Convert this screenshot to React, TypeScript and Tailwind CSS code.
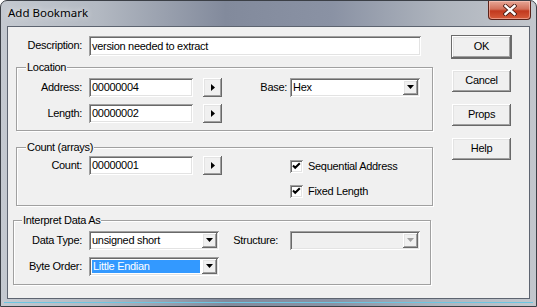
import React from "react";

const font = "font-['Liberation_Sans',Arial,sans-serif] text-[11px] leading-[13px] tracking-[-0.3px] text-black";
const raised =
  "bg-[#f0f0f0] shadow-[inset_-1px_-1px_0_#696969,inset_1px_1px_0_#ffffff,inset_-2px_-2px_0_#a0a0a0,inset_2px_2px_0_#e3e3e3]";
const sunken =
  "shadow-[inset_1px_1px_0_#a0a0a0,inset_-1px_-1px_0_#ffffff,inset_2px_2px_0_#696969,inset_-2px_-2px_0_#e3e3e3]";

const Field: React.FC<{ value: string; w: string }> = ({ value, w }) => (
  <div className={`${w} h-[19px] bg-white ${sunken} flex items-center pl-[3px] pt-px`}>{value}</div>
);

const ArrowBtn: React.FC = () => (
  <div className={`${raised} w-[19px] h-[19px] flex items-center justify-center`}>
    <svg width="4" height="7" viewBox="0 0 4 7">
      <path d="M0 0 L4 3.5 L0 7 Z" fill="#000" />
    </svg>
  </div>
);

const Combo: React.FC<{ value?: string; selected?: boolean; disabled?: boolean }> = ({
  value,
  selected,
  disabled,
}) => (
  <div
    className={`w-[130px] h-[19px] ${disabled ? "bg-[#f0f0f0]" : "bg-white"} ${sunken} flex items-stretch`}
  >
    {selected ? (
      <div className="flex-1 ml-[3px] my-[3px] mr-[2px] bg-[#3399ff] text-white flex items-center pl-px">
        {value}
      </div>
    ) : (
      <div className="flex-1 flex items-center pl-[3px] pt-px">{value}</div>
    )}
    <div className={`${raised} w-[15px] my-[2px] mr-[2px] flex items-center justify-center`}>
      <svg width="7" height="4" viewBox="0 0 7 4">
        <path d="M0 0 L7 0 L3.5 4 Z" fill={disabled ? "#a0a0a0" : "#000"} />
      </svg>
    </div>
  </div>
);

const Check: React.FC<{ label: string }> = ({ label }) => (
  <div className="flex items-center h-[13px]">
    <div className={`w-[13px] h-[13px] bg-white ${sunken} flex items-center justify-center`}>
      <svg width="13" height="13" viewBox="0 0 13 13">
        <path d="M3 5.5 L5.2 7.8 L9.8 3.2" stroke="#000" strokeWidth="2" fill="none" />
      </svg>
    </div>
    <span className="ml-[5px]">{label}</span>
  </div>
);

const Group: React.FC<{ title: string; cls: string; legendX: string; children: React.ReactNode }> = ({
  title,
  cls,
  legendX,
  children,
}) => (
  <div
    className={`relative border border-[#a0a0a0] shadow-[inset_1px_1px_0_#ffffff,1px_1px_0_#ffffff] ${cls}`}
  >
    <span className={`absolute -top-[7px] ${legendX} px-[1px] bg-[#f0f0f0]`}>{title}</span>
    {children}
  </div>
);

const PushBtn: React.FC<{ label: string; def?: boolean }> = ({ label, def }) => (
  <div
    className={`w-[59px] h-[22px] ${raised} flex items-center justify-center ${
      def ? "outline outline-1 outline-[#6b6b6b]" : ""
    }`}
  >
    {label}
  </div>
);

export default function App() {
  return (
    <div className="w-[537px] h-[307px] bg-white">
      <div className="w-[537px] h-[307px] rounded-t-[7px] border border-[#3b3f46] bg-[linear-gradient(to_right,#c4c9d0_0%,#b3b9c2_18%,#828a9c_42%,#8a92a4_62%,#aeb4bd_82%,#c3c7cd_100%)] flex flex-col overflow-hidden">
        {/* title bar */}
        <div className="h-[26px] flex items-start relative">
          <span className="ml-[7px] mt-[5px] font-['Noto_Sans',sans-serif] text-[11.5px] leading-[14px] text-black [text-shadow:0_0_6px_rgba(255,255,255,0.9)]">
            Add Bookmark
          </span>
          <div className="absolute left-[487px] top-0 w-[43px] h-[19px] rounded-b-[4px] border border-t-0 border-[#5b2219] bg-[linear-gradient(to_bottom,#e7a796_0%,#d2705a_45%,#c2391e_55%,#d65b3a_100%)] shadow-[inset_0_0_0_1px_rgba(255,210,200,0.5)] flex items-center justify-center">
            <svg width="14" height="12" viewBox="0 0 14 12">
              <path d="M2.5 2 L11.5 10 M11.5 2 L2.5 10" stroke="#4a1c14" strokeWidth="4.2" strokeLinecap="square" />
              <path d="M2.5 2 L11.5 10 M11.5 2 L2.5 10" stroke="#ffffff" strokeWidth="2.4" strokeLinecap="square" />
            </svg>
          </div>
        </div>

        {/* client area */}
        <div
          className={`ml-[7px] w-[521px] h-[272px] bg-[#f0f0f0] shadow-[0_0_0_1px_#5d6470] flex ${font}`}
        >
          <div className="w-[425px] flex flex-col">
            <div className="mt-[9px] flex items-center h-[20px]">
              <span className="w-[74px] text-right">Description:</span>
              <div className={`ml-[7px] w-[332px] h-[20px] bg-white ${sunken} flex items-center pl-[3px] pt-px`}>
                version needed to extract
              </div>
            </div>

            <Group title="Location" cls="mt-[11px] ml-[8px] w-[417px] h-[64px] pt-[10px]" legendX="left-[9px]">
              <div className="flex items-center">
                <span className="w-[65px] text-right">Address:</span>
                <div className="ml-[7px]">
                  <Field value="00000004" w="w-[104px]" />
                </div>
                <div className="ml-[10px]">
                  <ArrowBtn />
                </div>
                <span className="w-[65px] text-right">Base:</span>
                <div className="ml-[3px]">
                  <Combo value="Hex" />
                </div>
              </div>
              <div className="flex items-center mt-[7px]">
                <span className="w-[65px] text-right">Length:</span>
                <div className="ml-[7px]">
                  <Field value="00000002" w="w-[104px]" />
                </div>
                <div className="ml-[10px]">
                  <ArrowBtn />
                </div>
              </div>
            </Group>

            <Group title="Count (arrays)" cls="mt-[16px] ml-[8px] w-[417px] h-[59px] pt-[8px]" legendX="left-[9px]">
              <div className="flex items-start">
                <div className="flex items-center">
                  <span className="w-[65px] text-right">Count:</span>
                  <div className="ml-[7px]">
                    <Field value="00000001" w="w-[104px]" />
                  </div>
                  <div className="ml-[10px]">
                    <ArrowBtn />
                  </div>
                </div>
                <div className="ml-[68px] mt-[4px] flex flex-col gap-[12px]">
                  <Check label="Sequential Address" />
                  <Check label="Fixed Length" />
                </div>
              </div>
            </Group>

            <Group title="Interpret Data As" cls="mt-[14px] ml-[5px] w-[418px] h-[65px] pt-[10px]" legendX="left-[8px]">
              <div className="flex items-center">
                <span className="w-[68px] text-right">Data Type:</span>
                <div className="ml-[7px]">
                  <Combo value="unsigned short" />
                </div>
                <span className="w-[59px] text-right">Structure:</span>
                <div className="ml-[12px]">
                  <Combo disabled />
                </div>
              </div>
              <div className="flex items-center mt-[7px]">
                <span className="w-[68px] text-right">Byte Order:</span>
                <div className="ml-[7px]">
                  <Combo value="Little Endian" selected />
                </div>
              </div>
            </Group>
          </div>

          <div className="ml-[19px] mt-[9px] flex flex-col gap-[12px]">
            <PushBtn label="OK" def />
            <PushBtn label="Cancel" />
            <PushBtn label="Props" />
            <PushBtn label="Help" />
          </div>
        </div>

        {/* bottom frame */}
        <div className="h-[8px] flex flex-col">
          <div className="mt-[4px] mx-[3px] h-px bg-[#6cc6e2]" />
        </div>
      </div>
    </div>
  );
}
